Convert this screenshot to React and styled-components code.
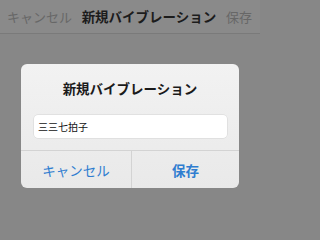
import React from "react";
import styled, { createGlobalStyle } from "styled-components";

const GlobalStyle = createGlobalStyle`
  html, body {
    margin: 0;
    padding: 0;
    background: #878787;
  }
  body {
    font-family: "Noto Sans CJK JP", "Noto Sans", sans-serif;
    width: 260px;
    height: 234px;
    overflow: hidden;
  }
`;

const Screen = styled.div`
  width: 260px;
  height: 234px;
  display: flex;
  flex-direction: column;
  background: #878787;
`;

const NavBar = styled.div`
  height: 33px;
  display: flex;
  align-items: center;
  justify-content: space-between;
  padding: 0 8px 0 7px;
  background: #8a8a8a;
  border-bottom: 1px solid #7a7a7a;
`;

const NavButton = styled.div`
  font-size: 13px;
  color: #676767;
  line-height: 1;
`;

const NavTitle = styled.div`
  font-size: 13.5px;
  font-weight: 700;
  color: #1c1c1c;
  line-height: 1;
`;

const Dialog = styled.div`
  width: 218px;
  margin: 30px 0 0 21px;
  border-radius: 6px;
  background: linear-gradient(#f2f2f2, #e9e9e9);
  display: flex;
  flex-direction: column;
  overflow: hidden;
`;

const DialogTitle = styled.div`
  padding-top: 14px;
  line-height: 20px;
  font-size: 13.5px;
  font-weight: 700;
  color: #1a1a1a;
  text-align: center;
`;

const Field = styled.div`
  margin: 17px 12px 12px 13px;
  height: 23px;
  background: #ffffff;
  border-radius: 4px;
  box-shadow: 0 0 0 0.5px #d4d4d4;
  display: flex;
  align-items: center;
  padding-left: 4px;
  font-size: 10px;
  color: #111;
`;

const Buttons = styled.div`
  display: grid;
  grid-template-columns: 110px 1fr;
  height: 37px;
  border-top: 1px solid #d3d3d3;
`;

const DialogButton = styled.div`
  display: flex;
  align-items: center;
  justify-content: center;
  font-size: 13.5px;
  font-weight: ${({ $primary }) => ($primary ? 700 : 400)};
  color: #2f7dd0;
  border-left: ${({ $primary }) => ($primary ? "1px solid #d3d3d3" : "none")};
`;

export default function App() {
  return (
    <Screen>
      <GlobalStyle />
      <NavBar>
        <NavButton>キャンセル</NavButton>
        <NavTitle>新規バイブレーション</NavTitle>
        <NavButton>保存</NavButton>
      </NavBar>
      <Dialog>
        <DialogTitle>新規バイブレーション</DialogTitle>
        <Field>三三七拍子</Field>
        <Buttons>
          <DialogButton>キャンセル</DialogButton>
          <DialogButton $primary>保存</DialogButton>
        </Buttons>
      </Dialog>
    </Screen>
  );
}
